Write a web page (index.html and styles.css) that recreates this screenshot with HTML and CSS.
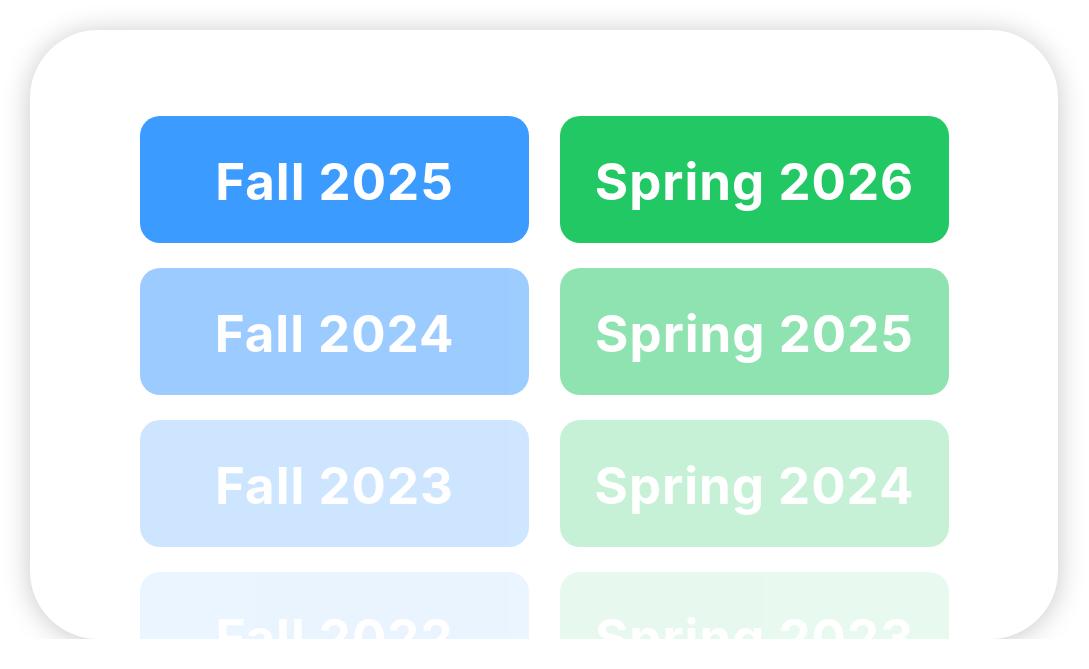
FILE: index.html
```html
<!DOCTYPE html>
<html>
<head>
<meta charset="utf-8">
<link rel="stylesheet" href="styles.css">
</head>
<body>
<div class="card">
  <div class="grid">
    <div class="btn fall o100">Fall 2025</div>
    <div class="btn spring o100">Spring 2026</div>
    <div class="btn fall o50">Fall 2024</div>
    <div class="btn spring o50">Spring 2025</div>
    <div class="btn fall o25">Fall 2023</div>
    <div class="btn spring o25">Spring 2024</div>
    <div class="btn fall o10">Fall 2022</div>
    <div class="btn spring o10">Spring 2023</div>
  </div>
</div>
</body>
</html>
```
FILE: styles.css
```css
html, body {
  margin: 0;
  padding: 0;
  background: #ffffff;
}
body {
  padding: 30px 31px 0 30px;
  font-family: Inter, "Open Sans", sans-serif;
}
.card {
  width: 1028px;
  height: 609px;
  border-radius: 68px;
  background: #ffffff;
  box-shadow: 0 2px 28px rgba(0, 0, 0, 0.22);
  overflow: hidden;
  box-sizing: border-box;
  padding: 86px 0 0 110px;
}
.grid {
  display: grid;
  grid-template-columns: 389px 389px;
  grid-auto-rows: 127px;
  column-gap: 31px;
  row-gap: 25px;
}
.btn {
  border-radius: 20px;
  display: flex;
  align-items: center;
  justify-content: center;
  color: #ffffff;
  font-weight: 700;
  font-size: 51px;
  letter-spacing: 1px;
  padding-top: 4px;
  box-sizing: border-box;
}
.fall { background: #3b9bff; }
.spring { background: #22c863; }
.o100 { opacity: 1; }
.o50 { opacity: 0.5; }
.o25 { opacity: 0.25; }
.o10 { opacity: 0.1; }
```
